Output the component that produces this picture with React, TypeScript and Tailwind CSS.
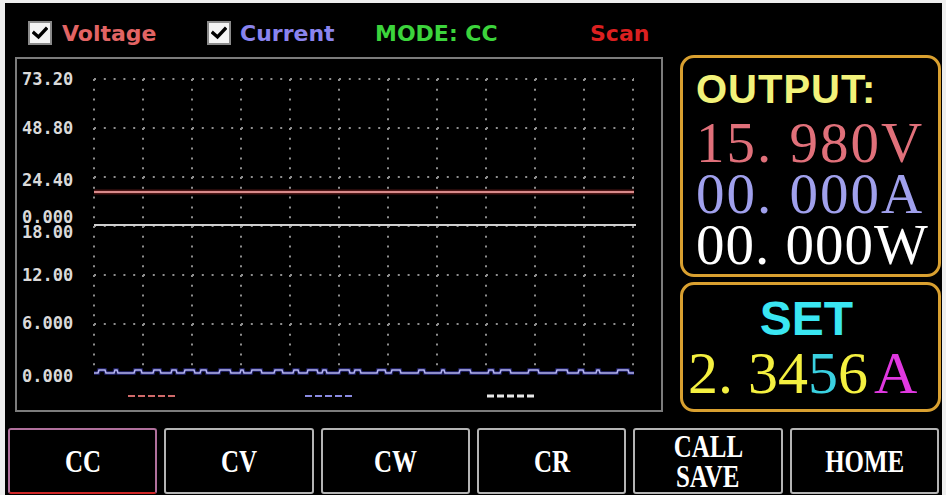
import React from "react";

const GRID_X = Array.from({ length: 12 }, (_, k) => 94 + 49 * k);
const GRID_Y = [79, 128, 177, 226, 275, 324];

const AXIS = [
  { t: "73.20", y: 79 },
  { t: "48.80", y: 128 },
  { t: "24.40", y: 180 },
  { t: "0.000", y: 217 },
  { t: "18.00", y: 232 },
  { t: "12.00", y: 275 },
  { t: "6.000", y: 323 },
  { t: "0.000", y: 376 },
];

// Current trace: flat baseline with small square ripples
function currentTrace(): string {
  let s = 11;
  const rnd = () => {
    s = (s * 16807) % 2147483647;
    return s / 2147483647;
  };
  let x = 94;
  let d = "M94 373";
  while (x < 634) {
    const flat = 4 + Math.floor(rnd() * 14);
    x = Math.min(634, x + flat);
    d += ` L${x} 373`;
    if (x >= 634) break;
    const w = 3 + Math.floor(rnd() * 10);
    const e = Math.min(634, x + w);
    d += ` L${x + 1} 370 L${e} 370 L${Math.min(634, e + 1)} 373`;
    x = Math.min(634, e + 1);
  }
  return d;
}

function Check() {
  return (
    <div className="w-[24px] h-[24px] bg-[#f4f4f4] border-2 border-[#8a8a8a] flex items-center justify-center">
      <svg width="16" height="14" viewBox="0 0 16 14">
        <path d="M2 7 L6.5 11 L14 3" fill="none" stroke="#000" strokeWidth="3.4" strokeLinecap="square" />
      </svg>
    </div>
  );
}

function Chart() {
  const wave = currentTrace();
  return (
    <div className="w-[648px] h-[355px] border-2 border-[#7c7c7c] mt-[2px] shrink-0">
      <svg width="644" height="351" viewBox="17 59 644 351" className="block">
        {GRID_X.map((x) => (
          <line key={"v" + x} x1={x} y1={79} x2={x} y2={373} stroke="#8e8e8e" strokeWidth="2" strokeDasharray="2 7.8" />
        ))}
        {GRID_Y.map((y) => (
          <line key={"h" + y} x1={94} y1={y} x2={634} y2={y} stroke="#8e8e8e" strokeWidth="2" strokeDasharray="2 7.8" />
        ))}
        {AXIS.map((a, i) => (
          <text
            key={i}
            x={22}
            y={a.y + 6}
            fill="#dadada"
            fontSize="17"
            fontWeight="bold"
            fontFamily="'DejaVu Sans Mono', monospace"
          >
            {a.t}
          </text>
        ))}
        {/* voltage trace */}
        <line x1={94} y1={192} x2={634} y2={192} stroke="#4a1414" strokeWidth="5" />
        <line x1={94} y1={192} x2={634} y2={192} stroke="#d88a8a" strokeWidth="2" />
        {/* power trace */}
        <line x1={94} y1={225} x2={636} y2={225} stroke="#cfcfcf" strokeWidth="2" />
        {/* current trace */}
        <path d={wave} fill="none" stroke="#1c1c5a" strokeWidth="4" />
        <path d={wave} fill="none" stroke="#b4b4f0" strokeWidth="1.6" />
        {/* legend */}
        <line x1={128} y1={396} x2={176} y2={396} stroke="#d06a6a" strokeWidth="2" strokeDasharray="7 3" />
        <line x1={305} y1={396} x2={353} y2={396} stroke="#8a8ae0" strokeWidth="2" strokeDasharray="7 3" />
        <line x1={487} y1={396} x2={535} y2={396} stroke="#e8e8e8" strokeWidth="3" strokeDasharray="7 3" />
      </svg>
    </div>
  );
}

const serif = { fontFamily: "'Liberation Serif', 'Times New Roman', serif" };
const sans = { fontFamily: "'Liberation Sans', Arial, sans-serif" };

function Panels() {
  return (
    <div className="ml-[17px] w-[261px] flex flex-col">
      <div className="h-[222px] border-[3px] border-[#d9a030] rounded-[14px] pl-[13px] pt-[9px] flex flex-col">
        <div className="text-[40px] leading-[44px] font-bold tracking-[1px] text-[#f2f27a]" style={sans}>
          OUTPUT:
        </div>
        <div className="mt-[6px] text-[57px] leading-[51px] tracking-[2px] whitespace-pre" style={serif}>
          <div className="text-[#e0707a]">15. 980V</div>
          <div className="text-[#a0a0ec]">00. 000A</div>
          <div className="text-white tracking-[1px]">00. 000W</div>
        </div>
      </div>
      <div className="mt-[5px] h-[130px] border-[3px] border-[#d9a030] rounded-[14px] flex flex-col items-center">
        <div className="mt-[6px] text-[48px] leading-[56px] font-bold text-[#3ae6f2] -translate-x-[4px]" style={sans}>
          SET
        </div>
        <div className="self-start pl-[5px] -mt-[2px] text-[60px] leading-[56px] whitespace-pre flex" style={serif}>
          <span className="text-[#f4f040]">2. 34</span>
          <span className="text-[#3ad0e0]">5</span>
          <span className="text-[#f4f040]">6</span>
          <span className="ml-[6px] text-[#e038e0]">A</span>
        </div>
      </div>
    </div>
  );
}

const BUTTONS: { label: string[]; active?: boolean }[] = [
  { label: ["CC"], active: true },
  { label: ["CV"] },
  { label: ["CW"] },
  { label: ["CR"] },
  { label: ["CALL", "SAVE"] },
  { label: ["HOME"] },
];

export default function App() {
  return (
    <div className="w-[946px] h-[495px] bg-[#eeeeee] pt-[3px] pl-[5px] pr-[4px] overflow-hidden">
      <div className="bg-black h-full flex flex-col">
        {/* status line */}
        <div className="h-[52px] shrink-0 flex items-center pl-[23px] pt-[8px] text-[22px] font-bold" style={{ fontFamily: "'DejaVu Sans', Verdana, sans-serif" }}>
          <div className="w-[179px] flex items-center">
            <Check />
            <span className="ml-[10px] text-[#e26464]">Voltage</span>
          </div>
          <div className="w-[168px] flex items-center">
            <Check />
            <span className="ml-[9px] text-[#8a84ee]">Current</span>
          </div>
          <div className="w-[215px] text-[#3cd43c]">MODE: CC</div>
          <div className="text-[#dc2020]">Scan</div>
        </div>

        {/* plot and readouts */}
        <div className="flex pl-[10px] shrink-0">
          <Chart />
          <Panels />
        </div>

        {/* mode buttons */}
        <div className="mt-[16px] flex-1 grid grid-cols-6 gap-[7px] px-[3px] pb-[1px]">
          {BUTTONS.map((b, i) => (
            <div
              key={i}
              className={
                b.active
                  ? "border-2 border-[#b0709c] border-b-[#d02828] rounded-[3px] flex flex-col items-center justify-center"
                  : "border-2 border-[#b4b4b4] rounded-[3px] flex flex-col items-center justify-center"
              }
            >
              {b.label.map((l) => (
                <span
                  key={l}
                  className="text-white font-bold text-[32px] leading-[30px] scale-x-[0.78] inline-block"
                  style={serif}
                >
                  {l}
                </span>
              ))}
            </div>
          ))}
        </div>
      </div>
    </div>
  );
}
